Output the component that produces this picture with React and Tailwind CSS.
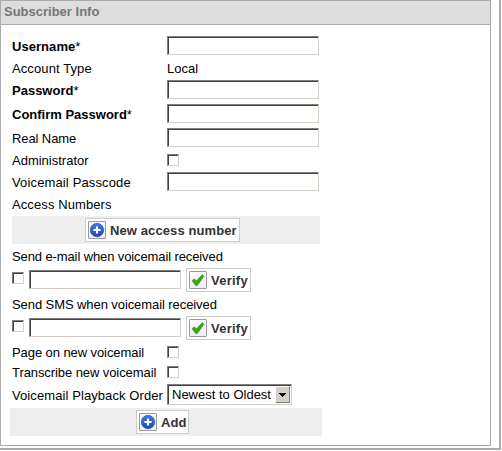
import React from 'react';

const sunken =
  'border border-t-[#808080] border-l-[#808080] border-r-[#d4d0c8] border-b-[#d4d0c8] bg-white shadow-[inset_1px_1px_0_#404040] rounded-none outline-none appearance-none shrink-0';

function Field({ className = '' }) {
  return <input type="text" className={`block h-[19px] w-[152px] px-1 text-[13px] ${sunken} ${className}`} />;
}

function Check({ className = '' }) {
  return <input type="checkbox" className={`block size-3 ${sunken} ${className}`} />;
}

function Row({ label, labelClass = 'pt-px', tall = false, children }) {
  return (
    <div className={`flex items-center ${tall ? 'h-6' : 'h-5'}`}>
      <div className={`h-[18px] w-[155px] shrink-0 whitespace-nowrap ${labelClass}`}>{label}</div>
      {children}
    </div>
  );
}

function Required({ children }) {
  return (
    <>
      <b>{children}</b>*
    </>
  );
}

function PlusIcon() {
  return (
    <svg viewBox="0 0 16 16" className="size-4">
      <defs>
        <linearGradient id="blue" x1="0" y1="0" x2="0" y2="1">
          <stop offset="0" stopColor="#3f7be6" />
          <stop offset="1" stopColor="#1f48b4" />
        </linearGradient>
      </defs>
      <circle cx="8" cy="8" r="6.7" fill="url(#blue)" stroke="#2450ac" strokeWidth=".7" />
      <path d="M8 4.4v7.2M4.4 8h7.2" stroke="#fff" strokeWidth="2.1" />
    </svg>
  );
}

function TickIcon() {
  return (
    <svg viewBox="0 0 16 16" className="size-4">
      <path d="M2 8.6 4 6.9 6.6 8.7 12.2 2.6 14 4.3 7.4 13.4 5.6 13.4Z" fill="#3fa31b" stroke="#338b18" strokeWidth=".6" strokeLinejoin="round" />
    </svg>
  );
}

function Button({ icon, label, className }) {
  return (
    <button className={`flex h-6 shrink-0 items-center border border-[#ccc] bg-white pl-0.5 text-[13px] leading-4 font-bold whitespace-nowrap text-[#333] ${className}`}>
      <span className="flex size-[18px] shrink-0 items-center justify-center rounded-[1px] border border-[#999] bg-linear-to-b from-white to-[#ededed]">{icon}</span>
      <span className="ml-1 pt-px">{label}</span>
    </button>
  );
}

function Notify({ label, labelClass }) {
  return (
    <>
      <div className={`flex h-5 items-center pt-px whitespace-nowrap ${labelClass}`}>{label}</div>
      <div className="flex h-7 items-start pt-0.5">
        <Check className="mt-1" />
        <Field className="mt-0.5 ml-[5px]" />
        <Button icon={<TickIcon />} label="Verify" className="ml-[5px] w-[65px] tracking-[0.25px]" />
      </div>
    </>
  );
}

export default function App() {
  return (
    <div className="h-[450px] w-[501px] border-r-2 border-b-2 border-[#aaa] bg-white font-['Liberation_Sans',Arial,sans-serif] text-[13px] leading-4 text-black">
      <div className="h-[446px] w-[491px] border border-[#aaa]">
        <h1 className="h-6 border-b border-[#aaa] bg-[#ddd] pt-[3px] pl-[3px] text-[13px] font-bold text-[#777]">
          Subscriber Info
        </h1>
        <div className="w-[320px] pt-[9px] pl-[11px]">
          <Row tall label={<Required>Username</Required>} labelClass="pt-0.5 tracking-[0.05px]"><Field className="mb-px" /></Row>
          <Row label="Account Type" labelClass="pt-0.5 tracking-[0.1px]"><span className="pt-px">Local</span></Row>
          <Row tall label={<Required>Password</Required>} labelClass="pt-0.5"><Field className="mb-px" /></Row>
          <Row tall label={<Required>Confirm Password</Required>} labelClass="pt-0.5"><Field className="mb-px" /></Row>
          <Row tall label="Real Name" labelClass="pt-0.5 tracking-[-0.1px]"><Field className="mb-px" /></Row>
          <Row label="Administrator" labelClass="pt-0.5"><Check /></Row>
          <Row tall label="Voicemail Passcode" labelClass="pt-0.5 tracking-[0.14px]"><Field className="mb-px" /></Row>
          <Row label="Access Numbers" labelClass="pt-0.5 tracking-[0.1px]" />
          <div className="my-0.5 flex h-7 w-[308px] items-center bg-[#eee] pl-[73px]">
            <Button icon={<PlusIcon />} label="New access number" className="w-[155px] tracking-[0.1px]" />
          </div>
          <Notify label="Send e-mail when voicemail received" labelClass="tracking-[-0.11px]" />
          <Notify label="Send SMS when voicemail received" labelClass="tracking-[-0.08px]" />
          <Row label="Page on new voicemail" labelClass="pt-0.5 tracking-[-0.08px]"><Check /></Row>
          <Row label="Transcribe new voicemail" labelClass="pt-0.5 tracking-[-0.08px]"><Check /></Row>
          <div className="pt-0.5">
            <Row tall label="Voicemail Playback Order" labelClass="-mt-px pt-px tracking-[0.09px]">
              <button className={`mb-[3px] flex h-[21px] w-[125px] items-center justify-between pr-px pl-1 text-left whitespace-nowrap ${sunken}`}>
                <span>Newest to Oldest</span>
                <span className="flex h-[17px] w-[15px] items-center justify-center border border-t-white border-l-white border-r-[#808080] border-b-[#808080] bg-[#d4d0c8]">
                  <svg viewBox="0 0 7 4" className="h-1 w-[7px]" shapeRendering="crispEdges"><path d="M0 0h7L3.5 4Z" /></svg>
                </span>
              </button>
            </Row>
          </div>
        </div>
        <div className="ml-[9px] flex h-7 w-[312px] items-center bg-[#eee] pl-[126px]">
          <Button icon={<PlusIcon />} label="Add" className="w-[53px] tracking-[0.1px]" />
        </div>
      </div>
    </div>
  );
}
